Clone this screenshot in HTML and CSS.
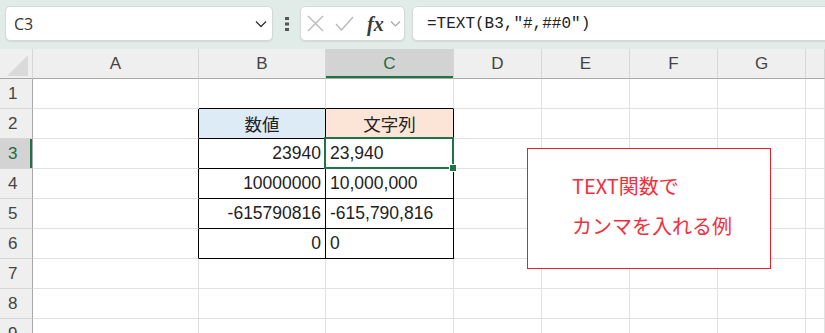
FILE: index.html
```html
<!DOCTYPE html>
<html lang="ja">
<head>
    <meta charset="UTF-8">
    <meta name="viewport" content="width=device-width, initial-scale=1.0">
    <title>TEXT関数</title>
    <link rel="stylesheet" href="styles.css">
</head>
<body>
    <div class="toolbar">
        <div class="namebox">
            <span>C3</span>
            <svg class="chev" width="12" height="8" viewBox="0 0 12 8"><polyline points="1,1.5 6,6.5 11,1.5" fill="none" stroke="#333" stroke-width="1.3"/></svg>
        </div>
        <div class="dots">
            <svg width="4" height="14" viewBox="0 0 4 14"><rect x="0" y="0" width="4" height="3" fill="#555"/><rect x="0" y="5.5" width="4" height="3" fill="#555"/><rect x="0" y="11" width="4" height="3" fill="#555"/></svg>
        </div>
        <div class="fnbox">
            <svg width="17" height="17" viewBox="0 0 17 17"><path d="M1 1 L16 16 M16 1 L1 16" stroke="#b9b9b9" stroke-width="1.4" fill="none"/></svg>
            <svg width="19" height="15" viewBox="0 0 19 15"><polyline points="1,8 6.5,14 18,1" fill="none" stroke="#b9b9b9" stroke-width="1.4"/></svg>
            <span class="fx">fx</span>
            <svg width="11" height="7" viewBox="0 0 11 7"><polyline points="1,1.5 5.5,6 10,1.5" fill="none" stroke="#a8a8a8" stroke-width="1.2"/></svg>
        </div>
        <div class="formula">=TEXT(B3,"#,##0")</div>
    </div>

    <div class="sheet">
        <!-- header -->
        <div class="corner"><span></span></div>
        <div class="hd">A</div>
        <div class="hd">B</div>
        <div class="hd sel">C</div>
        <div class="hd">D</div>
        <div class="hd">E</div>
        <div class="hd">F</div>
        <div class="hd">G</div>
        <div class="hd"></div>

        <!-- 1 -->
        <div class="rh">1</div>
        <div class="c"></div>
        <div class="c edge-b"></div>
        <div class="c edge-b"></div>
        <div class="c"></div><div class="c"></div><div class="c"></div><div class="c"></div><div class="c"></div>

        <!-- 2 -->
        <div class="rh">2</div>
        <div class="c edge-r"></div>
        <div class="c tb blue ctr">数値</div>
        <div class="c tb peach ctr">文字列</div>
        <div class="c"></div><div class="c"></div><div class="c"></div><div class="c"></div><div class="c"></div>

        <!-- 3 -->
        <div class="rh sel">3</div>
        <div class="c edge-r"></div>
        <div class="c tb num">23940</div>
        <div class="c tb active">23,940</div>
        <div class="c"></div><div class="c"></div><div class="c"></div><div class="c"></div><div class="c"></div>

        <!-- 4 -->
        <div class="rh">4</div>
        <div class="c edge-r"></div>
        <div class="c tb num">10000000</div>
        <div class="c tb">10,000,000</div>
        <div class="c"></div><div class="c"></div><div class="c"></div><div class="c"></div><div class="c"></div>

        <!-- 5 -->
        <div class="rh">5</div>
        <div class="c edge-r"></div>
        <div class="c tb num">-615790816</div>
        <div class="c tb">-615,790,816</div>
        <div class="c"></div><div class="c"></div><div class="c"></div><div class="c"></div><div class="c"></div>

        <!-- 6 -->
        <div class="rh">6</div>
        <div class="c edge-r"></div>
        <div class="c tb num">0</div>
        <div class="c tb">0</div>
        <div class="c"></div><div class="c"></div><div class="c"></div><div class="c"></div><div class="c"></div>

        <!-- 7 -->
        <div class="rh">7</div>
        <div class="c"></div><div class="c"></div><div class="c"></div><div class="c"></div><div class="c"></div><div class="c"></div><div class="c"></div><div class="c"></div>

        <!-- 8 -->
        <div class="rh">8</div>
        <div class="c"></div><div class="c"></div><div class="c"></div><div class="c"></div><div class="c"></div><div class="c"></div><div class="c"></div><div class="c"></div>

        <!-- 9 -->
        <div class="rh">9</div>
        <div class="c"></div><div class="c"></div><div class="c"></div><div class="c"></div><div class="c"></div><div class="c"></div><div class="c"></div><div class="c"></div>

        <div class="note">
            <p>TEXT関数で</p>
            <p>カンマを入れる例</p>
        </div>
    </div>
</body>
</html>
```

FILE: styles.css
```css
body {
    margin: 0;
    width: 825px;
    height: 333px;
    overflow: hidden;
    background-color: #ffffff;
    font-family: "Liberation Sans", "Noto Sans CJK JP", sans-serif;
    color: #222222;
}

/* barra de formulas */
.toolbar {
    display: flex;
    align-items: flex-start;
    box-sizing: border-box;
    height: 49px;
    padding: 6px 0 0 5px;
    background-color: #e1ece8;
    overflow: hidden;
}

.namebox,
.fnbox,
.formula {
    box-sizing: border-box;
    height: 35px;
    background-color: #ffffff;
    border: 1px solid #d3dad7;
    border-radius: 5px;
    box-shadow: 0 1px 1px rgba(0, 0, 0, 0.08);
}

.namebox {
    width: 268px;
    display: flex;
    align-items: center;
    justify-content: space-between;
    padding: 0 5px 0 8px;
    font-family: "Open Sans", "Liberation Sans", sans-serif;
    font-size: 16px;
    color: #333333;
}

.dots {
    width: 27px;
    height: 35px;
    display: flex;
    align-items: center;
    justify-content: center;
}

.fnbox {
    width: 105px;
    display: flex;
    align-items: center;
    padding: 0 0 0 6px;
}

.fnbox svg:nth-child(2) {
    margin-left: 11px;
}

.fx {
    margin-left: 13px;
    font-family: "Liberation Serif", serif;
    font-style: italic;
    font-weight: bold;
    font-size: 20px;
    color: #3a3a3a;
    line-height: 1;
}

.fnbox svg:last-child {
    margin-left: 6px;
}

.formula {
    flex: 1;
    margin-left: 7px;
    margin-right: -10px;
    display: flex;
    align-items: center;
    padding-left: 14px;
    font-family: "Liberation Mono", monospace;
    font-size: 16px;
    color: #222222;
}

/* hoja */
.sheet {
    position: relative;
    display: grid;
    grid-template-columns: 33px 166px 127px 128px 88px 88px 88px 88px 1fr;
    grid-auto-rows: 30px;
}

.sheet > div {
    box-sizing: border-box;
}

.corner {
    display: flex;
    justify-content: flex-end;
    align-items: flex-end;
    padding: 0 4px 2px 0;
    background-color: #efefef;
    border-right: 1px solid #d6d6d6;
    border-bottom: 1px solid #a8a8a8;
}

.corner span {
    width: 21px;
    height: 21px;
    background-color: #dadada;
    clip-path: polygon(100% 0, 100% 100%, 0 100%);
}

.hd {
    display: flex;
    align-items: center;
    justify-content: center;
    background-color: #efefef;
    border-right: 1px solid #d6d6d6;
    border-bottom: 1px solid #a8a8a8;
    font-size: 17px;
    color: #444444;
}

.rh {
    display: flex;
    align-items: center;
    padding-left: 8px;
    background-color: #efefef;
    border-right: 1px solid #a8a8a8;
    border-bottom: 1px solid #d6d6d6;
    font-size: 17px;
    color: #444444;
}

.hd.sel {
    background-color: #d3d3d3;
    color: #1e6b41;
    box-shadow: inset 0 -2px 0 #217346;
}

.rh.sel {
    background-color: #d3d3d3;
    color: #1e6b41;
    box-shadow: inset -2px 0 0 #217346;
}

.c {
    display: flex;
    align-items: center;
    padding: 0 4px;
    border-right: 1px solid #e1e1e1;
    border-bottom: 1px solid #e1e1e1;
    font-size: 17.5px;
    white-space: nowrap;
}

.edge-b {
    border-bottom-color: #000000;
}

.edge-r {
    border-right-color: #000000;
}

.tb {
    border-right-color: #000000;
    border-bottom-color: #000000;
}

.num {
    justify-content: flex-end;
}

.ctr {
    justify-content: center;
}

.blue {
    background-color: #ddebf7;
}

.peach {
    background-color: #fce4d6;
}

.active {
    position: relative;
}

.active::after {
    content: "";
    position: absolute;
    top: -2px;
    left: -2px;
    right: -1px;
    bottom: -1px;
    border: 2px solid #217346;
}

.active::before {
    content: "";
    position: absolute;
    right: -4px;
    bottom: -4px;
    width: 6px;
    height: 6px;
    background-color: #217346;
    border: 1px solid #ffffff;
    z-index: 1;
}

/* cuadro de nota */
.note {
    position: absolute;
    top: 99px;
    left: 527px;
    width: 244px;
    height: 121px;
    box-sizing: border-box;
    padding: 17px 0 0 44px;
    background-color: #ffffff;
    border: 1px solid #e8202c;
    font-family: "Noto Sans CJK JP", sans-serif;
    font-size: 20px;
    color: #f0303c;
}

.note p {
    margin: 0;
    line-height: 40px;
}
```
